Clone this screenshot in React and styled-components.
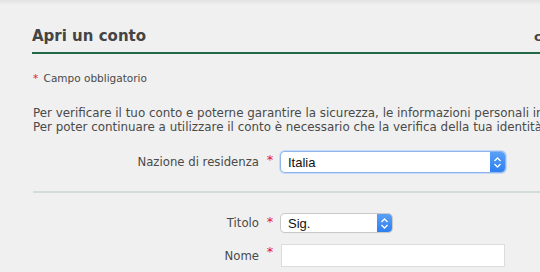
import React from "react"
import styled, { createGlobalStyle } from "styled-components"

const GlobalStyle = createGlobalStyle`
  html, body {
    margin: 0;
    padding: 0;
    background: #f0f0f0;
    overflow: hidden;
  }
  body {
    font-family: "DejaVu Sans", Verdana, sans-serif;
    color: #4a4a4a;
  }
`

const Page = styled.div`
  width: 640px;
  min-height: 272px;
  padding: 0 0 0 33px;
  background: linear-gradient(#e2e2e2, #f0f0f0 5px);
`

const Header = styled.div`
  display: grid;
  grid-template-columns: 502px auto;
  align-items: end;
  padding-top: 27px;
  padding-bottom: 7px;
  border-bottom: 2px solid #24684a;
  margin-left: -1px;
`

const Title = styled.h1`
  margin: 0;
  font-size: 15px;
  font-weight: bold;
  color: #444;
`

const Aside = styled.span`
  font-size: 13px;
  font-weight: bold;
  color: #444;
  padding-bottom: 1px;
`

const Required = styled.p`
  margin: 18px 0 0;
  font-size: 10.5px;
  color: #4a4a4a;
`

const Star = styled.span`
  color: #e0202a;
  margin-right: 2px;
`

const Intro = styled.p`
  margin: 22px 0 0;
  font-size: 11.9px;
  line-height: 14px;
  color: #4a4a4a;
  white-space: nowrap;
`

const Row = styled.div`
  display: grid;
  grid-template-columns: 226px 22px 1fr;
  align-items: center;
  height: ${(p) => p.$h || 20}px;
  margin-top: ${(p) => p.$mt || 0}px;
`

const Label = styled.label`
  font-size: 11.7px;
  text-align: right;
  color: #4a4a4a;
`

const StarCell = styled.span`
  text-align: center;
  color: #e0202a;
  font-size: 13px;
  line-height: 1;
  align-self: start;
  padding-top: 1px;
`

const Divider = styled.div`
  height: 2px;
  background: #d2dcd8;
  margin-top: 19px;
`

const SelectBox = styled.div`
  display: flex;
  width: ${(p) => p.$w}px;
  height: ${(p) => p.$h}px;
  border-radius: 4px;
  background: #fff;
  box-shadow: ${(p) =>
    p.$focus
      ? "0 0 0 1px #8fb6ea, 0 0 0 2px #c4daf6"
      : "0 0 0 1px #c9c9c9, 0 1px 1px rgba(0,0,0,0.12)"};
  overflow: hidden;
  font-family: "Liberation Sans", Arial, sans-serif;
`

const SelectText = styled.select`
  flex: 1;
  appearance: none;
  border: none;
  background: transparent;
  font: inherit;
  font-size: 13px;
  color: #111;
  padding: 0 0 0 7px;
  outline: none;
`

const Stepper = styled.span`
  width: 15px;
  display: flex;
  align-items: center;
  justify-content: center;
  background: linear-gradient(#5aa0f7, #2f7ff0);
`

const TextInput = styled.input`
  width: 224px;
  height: 23px;
  box-sizing: border-box;
  border: 1px solid #dcdcdc;
  background: #fff;
  outline: none;
`

function Arrows() {
  return (
    <svg width="9" height="13" viewBox="0 0 9 13" fill="none">
      <path d="M1.5 5 L4.5 2 L7.5 5" stroke="#fff" strokeWidth="1.3" />
      <path d="M1.5 8 L4.5 11 L7.5 8" stroke="#fff" strokeWidth="1.3" />
    </svg>
  )
}

function Select({ w, h, focus, value }) {
  return (
    <SelectBox $w={w} $h={h} $focus={focus}>
      <SelectText defaultValue={value}>
        <option>{value}</option>
      </SelectText>
      <Stepper>
        <Arrows />
      </Stepper>
    </SelectBox>
  )
}

export default function App() {
  return (
    <>
      <GlobalStyle />
      <Page>
        <Header>
          <Title>Apri un conto</Title>
          <Aside>contatti</Aside>
        </Header>
        <Required>
          <Star>*</Star> Campo obbligatorio
        </Required>
        <Intro>
          Per verificare il tuo conto e poterne garantire la sicurezza, le informazioni personali inserite devono essere corrette.
          <br />
          Per poter continuare a utilizzare il conto è necessario che la verifica della tua identità sia completata.
        </Intro>
        <Row $mt={18} $h={20}>
          <Label>Nazione di residenza</Label>
          <StarCell>*</StarCell>
          <Select w={224} h={20} focus value="Italia" />
        </Row>
        <Divider />
        <Row $mt={21} $h={18}>
          <Label>Titolo</Label>
          <StarCell>*</StarCell>
          <Select w={111} h={18} value="Sig." />
        </Row>
        <Row $mt={12} $h={23}>
          <Label>Nome</Label>
          <StarCell>*</StarCell>
          <TextInput />
        </Row>
      </Page>
    </>
  )
}
